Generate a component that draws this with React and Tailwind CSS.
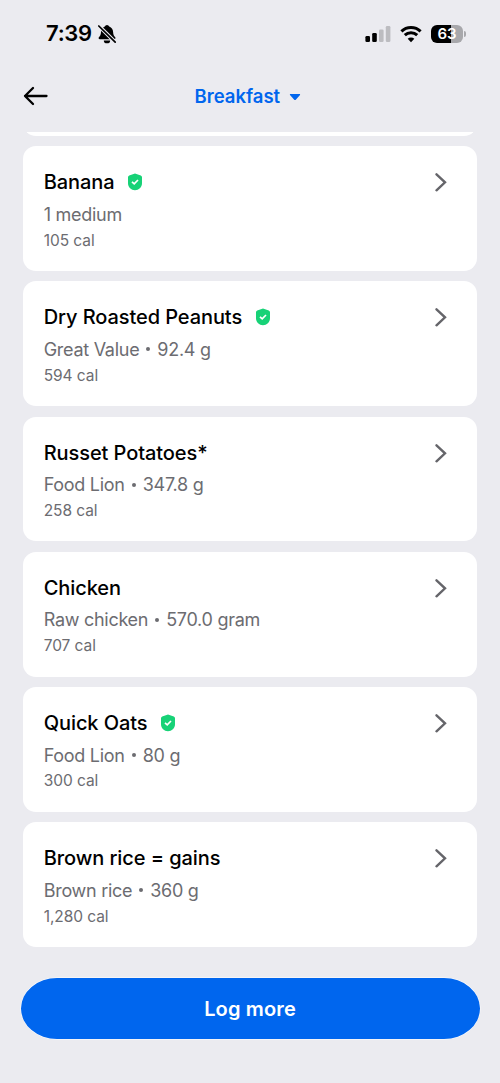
import React from 'react';

const foods = [
  { name: 'Banana', serving: ['1 medium'], calories: '105 cal', verified: true },
  { name: 'Dry Roasted Peanuts', serving: ['Great Value', '92.4 g'], calories: '594 cal', verified: true },
  { name: 'Russet Potatoes*', serving: ['Food Lion', '347.8 g'], calories: '258 cal' },
  { name: 'Chicken', serving: ['Raw chicken', '570.0 gram'], calories: '707 cal' },
  { name: 'Quick Oats', serving: ['Food Lion', '80 g'], calories: '300 cal', verified: true },
  { name: 'Brown rice = gains', serving: ['Brown rice', '360 g'], calories: '1,280 cal' },
];

const BellOff = () => (
  <svg width="20" height="20" viewBox="0 0 20 20" className="ml-[5px]">
    <path d="M7.800 2.600a2.300 2.300 0 0 1 4.400 0C14.800 3.500 16 5.600 16.100 8c.1 2.700.9 4 2.100 5.300.6.700.3 2-.9 2H2.800c-1.200 0-1.500-1.300-.9-2C3.100 12 3.900 10.700 4 8c.1-2.400 1.200-4.500 3.800-5.400z" />
    <path d="M6.800 16.400h6.400a3.200 2.900 0 0 1-6.400 0z" />
    <path d="M1.500 1.500l17.500 17.500" stroke="#ebebf0" strokeWidth="3.800" />
    <path d="M1.800 2l16.400 16.200" stroke="#000" strokeWidth="1.700" strokeLinecap="round" />
  </svg>
);

const Signal = () => (
  <svg width="26" height="18" viewBox="0 0 26 18">
    <rect x="0.400" y="11" width="4.600" height="6" rx="1.300" />
    <rect x="7.200" y="8" width="4.600" height="9" rx="1.300" />
    <rect x="14" y="4.500" width="4.600" height="12.500" rx="1.300" fill="#bcbcc0" />
    <rect x="20.800" y="1" width="4.600" height="16" rx="1.300" fill="#bcbcc0" />
  </svg>
);

const Wifi = () => (
  <svg width="22" height="18" viewBox="0 0 22 18" fill="none" stroke="#000" strokeWidth="3">
    <path d="M1.400 6.300a13.800 13.800 0 0 1 19.200 0" />
    <path d="M4.800 10.200a8.900 8.900 0 0 1 12.400 0" />
    <path d="M11 17.200l-3.300-3.400a4.700 4.700 0 0 1 6.600 0z" fill="#000" stroke="none" />
  </svg>
);

const Battery = () => (
  <div className="flex items-center">
    <div className="flex h-[18px] w-[32px] items-center justify-center rounded-[6px] bg-[linear-gradient(90deg,#000_63%,#a7a7ab_63%)] text-[15px] leading-[18px] font-semibold text-white">
      63
    </div>
    <div className="ml-px h-[6px] w-[2px] rounded-r-full bg-[#a7a7ab]" />
  </div>
);

const Verified = () => (
  <svg width="16" height="18" viewBox="0 0 16 18" className="ml-[13px]">
    <path d="M7.300.7a2 2 0 0 1 1.400 0l5.100 1.900c.8.300 1.200.9 1.200 1.700v6c0 4-3.300 7-7 7s-7-3-7-7v-6c0-.8.400-1.400 1.200-1.700z" fill="#17d277" />
    <path d="M5 8.800l2.200 2 3.800-3.800" fill="none" stroke="#fff" strokeWidth="1.700" />
  </svg>
);

const FoodCard = ({ food }) => (
  <div className="h-[124.800px] shrink-0 rounded-[13px] bg-white pt-[23px] pl-[20.500px] whitespace-nowrap">
    <div className="flex h-[26px] items-center">
      <h2 className="text-[20px] font-medium tracking-[-0.080px] text-black">{food.name}</h2>
      {food.verified && <Verified />}
      <svg width="12" height="20" viewBox="0 0 12 20" className="mr-[30px] ml-auto">
        <path d="M1.500 2.300l8.500 8-8.500 8" fill="none" stroke="#65656a" strokeWidth="2.400" strokeLinecap="round" />
      </svg>
    </div>
    <p className="mt-[6px] flex h-[26px] items-center text-[18px] tracking-[-0.280px] text-[#6c6c71]">
      {food.serving[0]}
      {food.serving[1] && (
        <>
          <span className="mx-[7px] h-[4px] w-[4px] rounded-full bg-[#6c6c71]" />
          {food.serving[1]}
        </>
      )}
    </p>
    <p className="mt-[0.400px] h-[26px] text-[15.500px] leading-[26px] tracking-[-0.060px] text-[#6c6c71]">{food.calories}</p>
  </div>
);

const App = () => (
  <div className="flex h-[1083px] w-[500px] flex-col overflow-hidden bg-[#ebebf0] font-['Inter',sans-serif]">
    {/* Status bar */}
    <div className="flex h-[67px] shrink-0 items-center pr-[34px] pl-[46px]">
      <span className="text-[22px] font-semibold tracking-[-0.300px]">7:39</span>
      <BellOff />
      <div className="ml-auto flex items-center gap-[9px]">
        <Signal />
        <Wifi />
        <Battery />
      </div>
    </div>

    {/* Meal picker */}
    <header className="flex h-[65px] shrink-0 items-start pt-[16px]">
      <button className="ml-[23px] flex h-[26px] w-[26px] items-center">
        <svg width="26" height="20" viewBox="0 0 26 20" fill="none" stroke="#000" strokeWidth="2.300" strokeLinecap="round" strokeLinejoin="round">
          <path d="M10 2l-8 8 8 8M2 10h21.500" />
        </svg>
      </button>
      <button className="mt-px ml-[145.500px] flex h-[26px] items-center text-[18.500px] font-semibold text-[#0066ee]">
        Breakfast
        <svg width="12" height="8" viewBox="0 0 12 8" className="ml-[9px]">
          <path d="M1.400 1h9.200c.5 0 .7.500.4.900L7 6.500a1.300 1.300 0 0 1-2 0L1 1.900c-.3-.4-.1-.9.400-.9z" fill="#0066ee" />
        </svg>
      </button>
    </header>

    {/* Logged foods, scrolled just past the first entry */}
    <main className="flex h-[815px] shrink-0 flex-col justify-end gap-[10.400px] overflow-hidden px-[23.200px]">
      <div className="h-[124.800px] shrink-0 rounded-[13px] bg-white" />
      {foods.map((food) => (
        <FoodCard key={food.name} food={food} />
      ))}
    </main>

    <button className="mx-[20.500px] mt-[31px] h-[61px] shrink-0 rounded-[36px/30.500px] bg-[#0066ee] text-[20px] font-semibold tracking-[0.150px] text-white shadow-[0_0_0_0.500px_#fff]">
      Log more
    </button>
  </div>
);

export default App;
